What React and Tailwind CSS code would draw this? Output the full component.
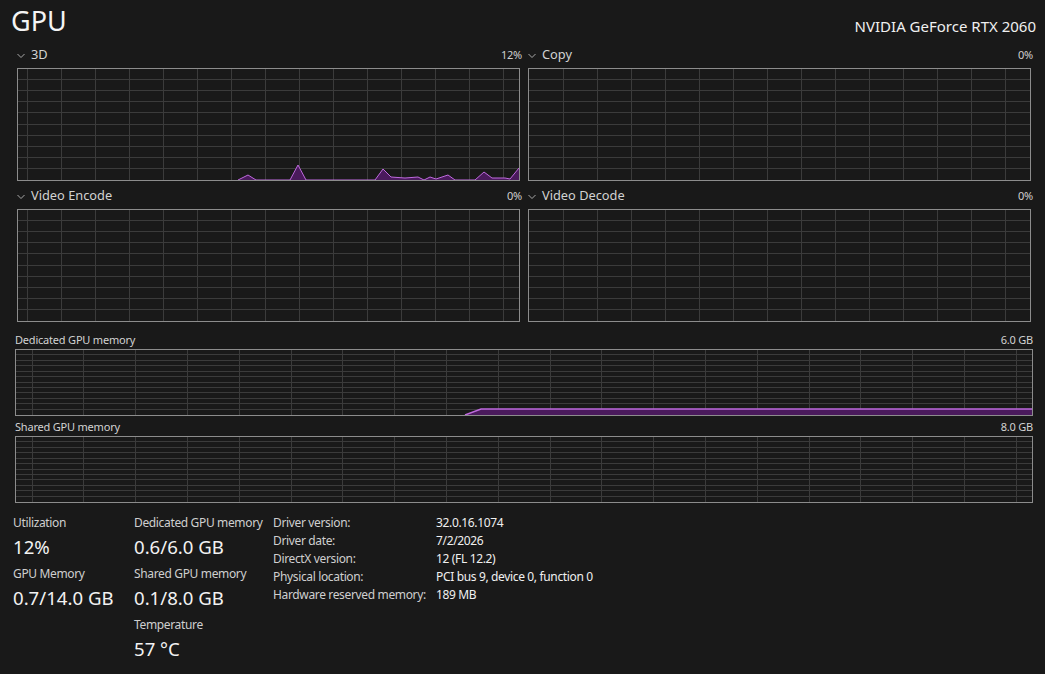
import React from "react";

const FONT = { fontFamily: '"Noto Sans", "Open Sans", sans-serif' };

const line3d = [
  [220, 111], [230, 106], [238, 111], [272, 111], [280, 96], [288, 111],
  [357, 111], [365, 100], [373, 108], [387, 109], [400, 108], [406, 111], [412, 108],
  [418, 110], [424, 108], [430, 106], [437, 111], [457, 111], [466, 103], [474, 109],
  [487, 109], [492, 110], [501, 99],
];

function Chevron() {
  return (
    <svg width="8" height="6" viewBox="0 0 8 6" className="mr-[6px] mt-[1px]">
      <path d="M0.5 1 L4 4.5 L7.5 1" fill="none" stroke="#a8a8a8" strokeWidth="1" />
    </svg>
  );
}

function Grid({ w, h, rows, step, offset }) {
  const lines = [];
  for (let i = 1; i < rows; i++) {
    const y = Math.round((i * h) / rows) - 0.5;
    lines.push(<line key={"h" + i} x1={0} x2={w} y1={y} y2={y} />);
  }
  let k = 0;
  for (let x = offset; x < w; x += step) {
    const xx = Math.round(x) + 0.5;
    lines.push(<line key={"v" + k++} x1={xx} x2={xx} y1={0} y2={h} />);
  }
  return (
    <g stroke="#3b3b3b" strokeWidth="1">
      {lines}
    </g>
  );
}

function EngineGraph({ title, pct, offset, points }) {
  const w = 501;
  const h = 111;
  return (
    <div className="w-[503px]">
      <div className="flex h-[20px] items-center justify-between">
        <div className="flex items-center text-[12.8px] text-[#d2d2d2]">
          <Chevron />
          {title}
        </div>
        <span className="mr-[-2px] text-[11px] tracking-[-0.2px] text-[#cfcfcf]">{pct}</span>
      </div>
      <div className="mt-[3px] h-[113px] border border-[#8c8c8c]">
        <svg width={w} height={h} className="block">
          <Grid w={w} h={h} rows={10} step={34} offset={offset} />
          {points && (
            <>
              <polygon
                points={points.map((p) => p.join(",")).join(" ") + ` ${w},${h} 220,${h}`}
                fill="#4a1a5c"
              />
              <polyline
                points={points.map((p) => p.join(",")).join(" ")}
                fill="none"
                stroke="#bf6ade"
                strokeWidth="1"
              />
            </>
          )}
        </svg>
      </div>
    </div>
  );
}

function MemoryGraph({ title, total, usage }) {
  const w = 1016;
  const h = 65;
  return (
    <div className="w-[1018px]">
      <div className="flex h-[18px] items-center justify-between text-[11px] tracking-[-0.2px] text-[#d2d2d2]">
        <span>{title}</span>
        <span>{total}</span>
      </div>
      <div className="h-[67px] border border-[#8c8c8c]">
        <svg width={w} height={h} className="block">
          <Grid w={w} h={h} rows={12} step={51.8} offset={15.6} />
          {usage && (
            <>
              <polygon points={`449,${h} 465,59 ${w},59 ${w},${h}`} fill="#4a1a5c" />
              <polyline
                points={`449,${h} 465,59 ${w},59`}
                fill="none"
                stroke="#bf6ade"
                strokeWidth="1.5"
              />
            </>
          )}
        </svg>
      </div>
    </div>
  );
}

function Stat({ label, value }) {
  return (
    <div className="mb-[7px]">
      <div className="h-[16px] text-[12px] leading-[16px] tracking-[-0.35px] text-[#cfcfcf]">{label}</div>
      <div className="mt-[4px] h-[24px] text-[18.6px] leading-[24px] text-[#f2f2f2]">{value}</div>
    </div>
  );
}

const details = [
  ["Driver version:", "32.0.16.1074"],
  ["Driver date:", "7/2/2026"],
  ["DirectX version:", "12 (FL 12.2)"],
  ["Physical location:", "PCI bus 9, device 0, function 0"],
  ["Hardware reserved memory:", "189 MB"],
];

export default function App() {
  return (
    <div className="h-[674px] w-[1045px] overflow-hidden bg-[#191919] text-white" style={FONT}>
      <div className="flex h-[45px] items-start justify-between pl-[11px] pr-[9px] pt-[3px]">
        <div className="text-[27px] leading-[36px] text-[#f4f4f4]">GPU</div>
        <div className="mt-[13px] text-[15px] leading-[20px] text-[#f0f0f0]">NVIDIA GeForce RTX 2060</div>
      </div>

      <div className="flex gap-[8px] pl-[17px]">
        <EngineGraph title="3D" pct="12%" offset={8.7} points={line3d} />
        <EngineGraph title="Copy" pct="0%" offset={33.7} />
      </div>
      <div className="mt-[5px] flex gap-[8px] pl-[17px]">
        <EngineGraph title="Video Encode" pct="0%" offset={8.7} />
        <EngineGraph title="Video Decode" pct="0%" offset={33.7} />
      </div>

      <div className="mt-[9px] pl-[15px]">
        <MemoryGraph title="Dedicated GPU memory" total="6.0 GB" usage />
      </div>
      <div className="mt-[2px] pl-[15px]">
        <MemoryGraph title="Shared GPU memory" total="8.0 GB" />
      </div>

      <div className="mt-[12px] flex pl-[13px]">
        <div className="w-[121px]">
          <Stat label="Utilization" value="12%" />
          <Stat label="GPU Memory" value="0.7/14.0 GB" />
        </div>
        <div className="w-[139px]">
          <Stat label="Dedicated GPU memory" value="0.6/6.0 GB" />
          <Stat label="Shared GPU memory" value="0.1/8.0 GB" />
          <Stat label="Temperature" value="57 °C" />
        </div>
        <div className="-mt-[1px] text-[12px] leading-[18px] tracking-[-0.35px]">
          {details.map(([k, v]) => (
            <div key={k} className="flex">
              <span className="w-[163px] text-[#cfcfcf]">{k}</span>
              <span className="text-[#f0f0f0]">{v}</span>
            </div>
          ))}
        </div>
      </div>
    </div>
  );
}
